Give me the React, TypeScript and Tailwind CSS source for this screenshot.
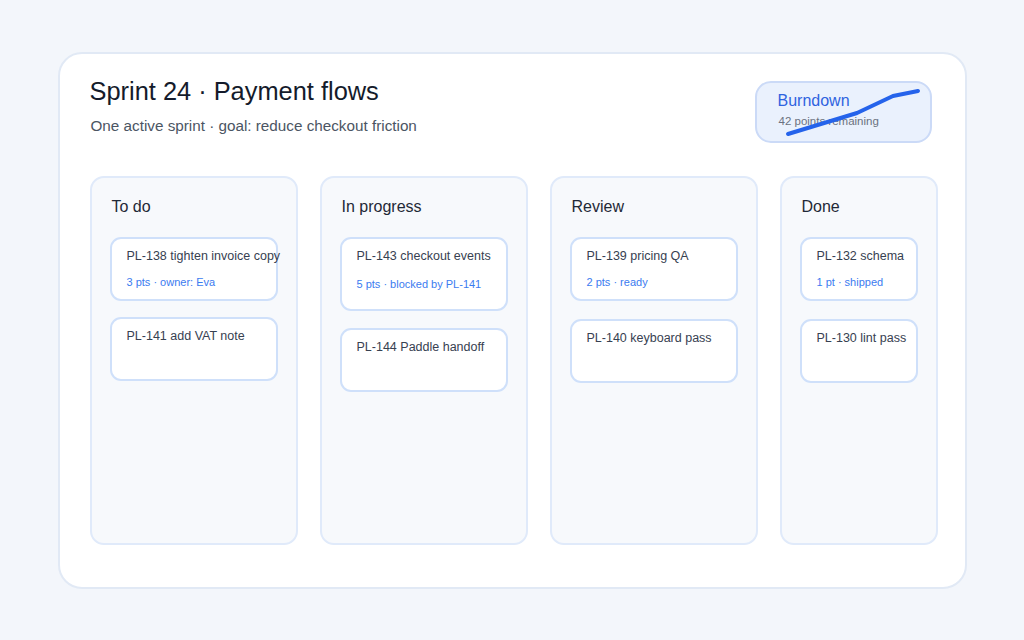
import React from "react";

type Card = { id: string; title: string; meta?: string; h: string; metaGap: string };
type Column = { name: string; width: string; gap: string; cards: Card[] };

const columns: Column[] = [
  {
    name: "To do",
    width: "w-[208px]",
    gap: "gap-4",
    cards: [
      { id: "PL-138", title: "tighten invoice copy", meta: "3 pts · owner: Eva", h: "h-[64px]", metaGap: "mt-[10px]" },
      { id: "PL-141", title: "add VAT note", h: "h-[64px]", metaGap: "" },
    ],
  },
  {
    name: "In progress",
    width: "w-[208px]",
    gap: "gap-[17px]",
    cards: [
      { id: "PL-143", title: "checkout events", meta: "5 pts · blocked by PL-141", h: "h-[74px]", metaGap: "mt-[12px]" },
      { id: "PL-144", title: "Paddle handoff", h: "h-[64px]", metaGap: "" },
    ],
  },
  {
    name: "Review",
    width: "w-[208px]",
    gap: "gap-[18px]",
    cards: [
      { id: "PL-139", title: "pricing QA", meta: "2 pts · ready", h: "h-[64px]", metaGap: "mt-[10px]" },
      { id: "PL-140", title: "keyboard pass", h: "h-[64px]", metaGap: "" },
    ],
  },
  {
    name: "Done",
    width: "w-[158px]",
    gap: "gap-[18px]",
    cards: [
      { id: "PL-132", title: "schema", meta: "1 pt · shipped", h: "h-[64px]", metaGap: "mt-[10px]" },
      { id: "PL-130", title: "lint pass", h: "h-[64px]", metaGap: "" },
    ],
  },
];

function Burndown() {
  return (
    <div className="relative w-[177px] h-[62px] rounded-2xl border-2 border-[#cbdaf7] bg-[#eaf1fd] pl-[21px] pt-[8px]">
      <div className="text-[16px] leading-[20px] text-[#2f63e0]">Burndown</div>
      <div className="mt-[2px] pl-[1px] text-[11.5px] leading-[16px] text-[#6b7280]">42 points remaining</div>
      <svg className="absolute -left-[2px] -top-[2px]" width="177" height="62" viewBox="0 0 177 62">
        <polyline
          points="33,53 102,32 138,15 163,10"
          fill="none"
          stroke="#2563eb"
          strokeWidth="4"
          strokeLinecap="round"
          strokeLinejoin="round"
        />
      </svg>
    </div>
  );
}

export default function App() {
  return (
    <div
      className="min-h-screen w-full bg-[#f3f6fb] flex items-start justify-center pt-[52px]"
      style={{ fontFamily: '"Liberation Sans", Arial, sans-serif' }}
    >
      <div className="w-[909px] h-[537px] rounded-[24px] border-2 border-[#e1e9f5] bg-white pl-[30px] pr-[26px] pt-[21px]">
        <div className="flex items-start justify-between">
          <div>
            <h1 className="text-[25.4px] leading-[32px] text-[#141b2b]">Sprint 24 · Payment flows</h1>
            <p className="mt-[9px] text-[15.25px] leading-[20px] text-[#4b5563] pl-[1px]">
              One active sprint · goal: reduce checkout friction
            </p>
          </div>
          <div className="mt-[6px] mr-[7px]">
            <Burndown />
          </div>
        </div>

        <div className="mt-[33px] flex gap-[22px]">
          {columns.map((col) => (
            <div
              key={col.name}
              className={`${col.width} h-[369px] rounded-[14px] border-2 border-[#e0eafa] bg-[#f7f9fc] px-[18px] pt-[18px]`}
            >
              <div className="pl-[2px] pt-[1px] text-[16px] leading-[20px] text-[#1f2937]">{col.name}</div>
              <div className={`mt-[20px] flex flex-col ${col.gap}`}>
                {col.cards.map((card) => (
                  <div
                    key={card.id}
                    className={`${card.h} rounded-[11px] border-2 border-[#cfe0fa] bg-white pl-[15px] pt-[8px] whitespace-nowrap`}
                  >
                    <div className="text-[12.5px] leading-[18px] text-[#374151]">
                      {card.id} {card.title}
                    </div>
                    {card.meta && (
                      <div className={`${card.metaGap} text-[11px] leading-[14px] text-[#3b7bf0]`}>{card.meta}</div>
                    )}
                  </div>
                ))}
              </div>
            </div>
          ))}
        </div>
      </div>
    </div>
  );
}
